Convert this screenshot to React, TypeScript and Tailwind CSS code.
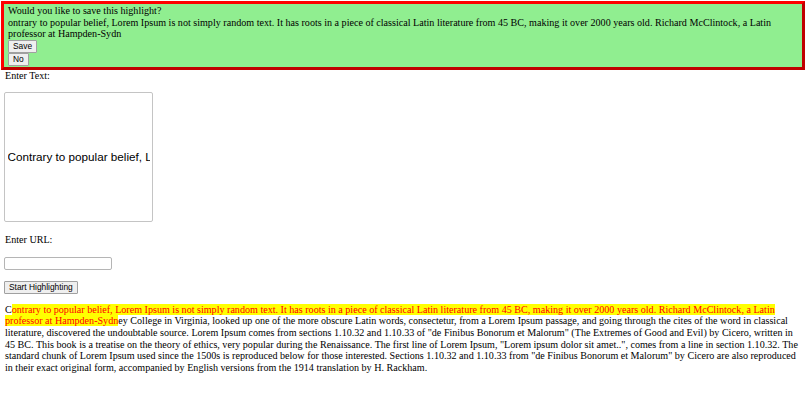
const paragraphRest =
  'ey College in Virginia, looked up one of the more obscure Latin words, consectetur, from a Lorem Ipsum passage, and going through the cites of the word in classical literature, discovered the undoubtable source. Lorem Ipsum comes from sections 1.10.32 and 1.10.33 of "de Finibus Bonorum et Malorum" (The Extremes of Good and Evil) by Cicero, written in 45 BC. This book is a treatise on the theory of ethics, very popular during the Renaissance. The first line of Lorem Ipsum, "Lorem ipsum dolor sit amet..", comes from a line in section 1.10.32. The standard chunk of Lorem Ipsum used since the 1500s is reproduced below for those interested. Sections 1.10.32 and 1.10.33 from "de Finibus Bonorum et Malorum" by Cicero are also reproduced in their exact original form, accompanied by English versions from the 1914 translation by H. Rackham.'

const highlighted =
  'ontrary to popular belief, Lorem Ipsum is not simply random text. It has roots in a piece of classical Latin literature from 45 BC, making it over 2000 years old. Richard McClintock, a Latin professor at Hampden-Sydn'

const fullText = 'C' + highlighted + paragraphRest

function Btn({ children }: { children: string }) {
  return (
    <button className="block h-[12.5px] px-[4px] text-[8.4px] leading-[10px] font-['Liberation_Sans',Arial,sans-serif] text-black bg-[#efefef] border border-[#a0a0a0] rounded-[1px]">
      {children}
    </button>
  )
}

export default function App() {
  return (
    <div className="w-[805px] h-[403px] bg-white text-black font-['Liberation_Serif','Times_New_Roman',serif] text-[10.1px] leading-[11.5px]">
      {/* save popup */}
      <div className="ml-[1px] mt-[1px] h-[69px] border-[3px] border-t-[#ff0000] border-l-[#ff0000] border-r-[#c00000] border-b-[#c00000] bg-[#90ee90] pl-[4px] pr-[4px] pt-[1px]">
        <div>Would you like to save this highlight?</div>
        <div>{highlighted}</div>
        <div className="mt-[0.5px] flex flex-col items-start gap-[0.5px]">
          <Btn>Save</Btn>
          <Btn>No</Btn>
        </div>
      </div>

      <div className="pl-[4px] pr-[5px]">
        <div className="ml-[1px] mt-[-0.5px]">Enter Text:</div>
        <input
          readOnly
          value={fullText}
          className="mt-[10.5px] block w-[149px] h-[130px] pl-[2.5px] pr-[2px] border border-[#c4c4c4] rounded-[2px] bg-white text-[11.7px] font-['Liberation_Sans',Arial,sans-serif] text-black outline-none"
        />
        <div className="ml-[1px] mt-[12.5px]">Enter URL:</div>
        <input className="mt-[11px] block w-[108px] h-[13px] border border-[#b5b5b5] rounded-[2px] bg-white outline-none" />
        <button className="mt-[11px] block h-[13px] px-[4px] text-[8.4px] leading-[10px] font-['Liberation_Sans',Arial,sans-serif] text-black bg-[#efefef] border border-[#a0a0a0] rounded-[1px]">
          Start Highlighting
        </button>
        <p className="ml-[1px] mt-[10px] leading-[11.7px]">
          C<span className="bg-[#ffff00] text-[#ff0000]">{highlighted}</span>
          {paragraphRest}
        </p>
      </div>
    </div>
  )
}
